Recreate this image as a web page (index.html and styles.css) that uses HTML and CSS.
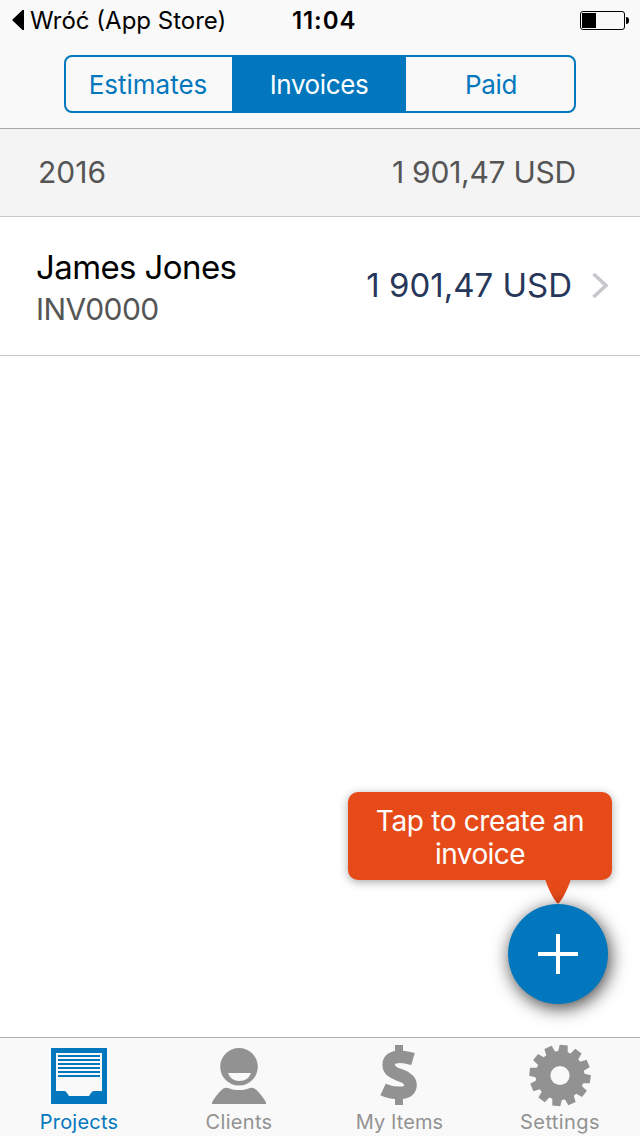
FILE: index.html
```
<!DOCTYPE html>
<html lang="en">
<head>
  <meta charset="UTF-8">
  <title>Invoices</title>
  <link rel="stylesheet" href="styles.css">
</head>
<body>
  <div class="app">

    <header class="header">
      <div class="status-bar">
        <div class="back">
          <svg class="back-arrow" width="12" height="22" viewBox="0 0 12 22"><path d="M12 1v20h-1.500L0.500 11.500v-1L10.500 1z"/></svg>
          <span class="back-label">Wróć (App Store)</span>
        </div>
        <span class="clock">11:04</span>
        <div class="battery">
          <div class="battery-body"><div class="battery-level"></div></div>
          <div class="battery-tip"></div>
        </div>
      </div>
      <nav class="segments">
        <a class="segment estimates">Estimates</a>
        <a class="segment invoices active">Invoices</a>
        <a class="segment paid">Paid</a>
      </nav>
    </header>

    <main class="content">
      <div class="section-header">
        <span class="section-year">2016</span>
        <span class="section-total">1 901,47 USD</span>
      </div>
      <div class="row">
        <div class="row-info">
          <span class="client">James Jones</span>
          <span class="number">INV0000</span>
        </div>
        <span class="amount">1 901,47 USD</span>
        <svg class="chevron" width="18" height="28" viewBox="0 0 18 28"><path d="M1.500 2L14 13.500 1.500 25" fill="none" stroke="#c7c7cc" stroke-width="3.600"/></svg>
      </div>

      <!-- Floating add button with its hint -->
      <div class="create">
        <div class="hint">
          <span class="hint-line">Tap to create an</span>
          <span class="hint-line hint-second">invoice</span>
          <svg class="hint-tail" width="26" height="26" viewBox="0 0 26 26"><path d="M0 0h26Q21 15 14.500 23.500Q13 25.500 11.500 23.500Q5 15 0 0z" fill="#e64a19"/></svg>
        </div>
        <button class="add">
          <svg width="40" height="40" viewBox="0 0 40 40"><path d="M18 0h4v18h18v4H22v18h-4V22H0v-4h18z" fill="#fff"/></svg>
        </button>
      </div>
    </main>

    <footer class="tabs">
      <a class="tab active">
        <svg class="tab-icon" width="64" height="64" viewBox="1 0 64 64">
          <path d="M4 4h56v56H4z" fill="#0277bd"/>
          <path d="M9 9h46v38h-8q-2 0-3 2l-2 3H22l-2-3q-1-2-3-2H9z" fill="#f9f9f9"/>
          <path d="M11 12h42M11 16h42M11 20h42M11 24h42M11 28h42M11 32h42" stroke="#0277bd" stroke-width="2"/>
        </svg>
        <span class="tab-label projects">Projects</span>
      </a>
      <a class="tab">
        <svg class="tab-icon" width="64" height="64" viewBox="0 0 64 64">
          <circle cx="31" cy="22.800" r="18.800"/>
          <path d="M20 29h23q-3 8-11.500 8T20 29z" fill="#f9f9f9"/>
          <path d="M4 60v-1.500C6 54 10 49.500 13.500 46q3.500-3.500 8-1.500c5.500 2 13.500 2 19 0q4.500-2 8 1.500C52 49.500 56 54 58 58.500V60z"/>
        </svg>
        <span class="tab-label clients">Clients</span>
      </a>
      <a class="tab">
        <svg class="tab-icon" width="64" height="64" viewBox="0 0 64 64">
          <path d="M27 1h8v8h-8zM27 53h8v8h-8z"/>
          <path d="M45 15Q37 12.700 32 12.700C24.500 12.700 20.700 16 20.700 20.500C20.700 26.500 25 28.500 31 30.800C38 33.300 42.500 36 42.500 41C42.500 46.300 38.500 48.800 31 48.800Q22 48.800 15 45.500" fill="none" stroke="#929292" stroke-width="12.600"/>
        </svg>
        <span class="tab-label items">My Items</span>
      </a>
      <a class="tab">
        <svg class="tab-icon" width="64" height="64" viewBox="-32 -31.500 64 64">
          <g transform="rotate(7)">
            <circle r="24.500"/>
            <g id="teeth">
              <path id="tooth" d="M-5-22l1-8.600h8l1 8.600v44l-1 8.600h-8l-1-8.600z"/>
              <use href="#tooth" transform="rotate(30)"/>
              <use href="#tooth" transform="rotate(60)"/>
            </g>
            <use href="#teeth" transform="rotate(90)"/>
          </g>
          <circle r="9.600" fill="#f9f9f9"/>
        </svg>
        <span class="tab-label settings">Settings</span>
      </a>
    </footer>

  </div>
</body>
</html>
```
FILE: styles.css
```
* {
  box-sizing: border-box;
}

body {
  margin: 0;
  background: #fff;
  font-family: Inter, "Liberation Sans", sans-serif;
}

.app {
  display: flex;
  flex-direction: column;
  width: 640px;
  height: 1136px;
  overflow: hidden;
}

/* Header */
.header {
  height: 129px;
  background: #f9f9f9;
  border-bottom: 1px solid #a9a9ac;
}

.status-bar {
  display: grid;
  grid-template-columns: 292px 1fr auto;
  align-items: center;
  height: 40px;
  padding-right: 11px;
}

.back {
  display: flex;
  align-items: center;
  gap: 6px;
  padding-left: 12px;
}

.back-label {
  font-size: 24px;
}

.clock {
  font-size: 24px;
  font-weight: 600;
  letter-spacing: 0.9px;
}

.battery {
  display: flex;
  align-items: center;
  gap: 1px;
}

.battery-body {
  width: 45px;
  height: 19px;
  padding: 1px;
  border: 1px solid #000;
  border-radius: 3px;
}

.battery-level {
  width: 14px;
  height: 15px;
  background: #000;
}

.battery-tip {
  width: 3px;
  height: 7px;
  background: #000;
  border-radius: 0 3px 3px 0;
}

.segments {
  display: grid;
  grid-template-columns: 166px 174px 1fr;
  width: 512px;
  height: 58px;
  margin: 15px 0 0 64px;
  border: 2px solid #0277bd;
  border-radius: 8px;
  overflow: hidden;
}

.segment {
  display: flex;
  align-items: center;
  justify-content: center;
  color: #0277bd;
  font-size: 26px;
}

.estimates {
  padding-right: 2px;
}

.invoices {
  letter-spacing: -0.4px;
}

.paid {
  padding-left: 2px;
  letter-spacing: -0.3px;
}

.segment.active {
  background: #0277bd;
  color: #fff;
}

/* Invoice list */
.content {
  position: relative;
  flex: 1;
}

.section-header {
  display: flex;
  align-items: center;
  justify-content: space-between;
  height: 88px;
  padding: 0 64px 2px 38px;
  background: #f4f4f4;
  border-bottom: 1px solid #c8c7cc;
  color: #555;
  font-size: 30px;
}

.section-total {
  letter-spacing: -0.25px;
}

.row {
  display: flex;
  align-items: center;
  height: 139px;
  padding: 0 30px 0 36px;
  border-bottom: 1px solid #c8c7cc;
}

.row-info {
  display: flex;
  flex: 1;
  flex-direction: column;
  padding-top: 3px;
}

.client {
  font-size: 33px;
  letter-spacing: -0.6px;
  line-height: 42px;
}

.number {
  color: #555;
  font-size: 30px;
  letter-spacing: -0.6px;
  line-height: 42px;
}

.amount {
  padding-bottom: 2px;
  color: #27375a;
  font-size: 33px;
}

.chevron {
  margin-left: 20px;
}

/* Add button and hint */
.create {
  position: absolute;
  right: 28px;
  bottom: 33px;
  width: 264px;
}

.hint {
  position: relative;
  display: flex;
  flex-direction: column;
  align-items: center;
  height: 88px;
  padding-top: 13px;
  background: #e64a19;
  border-radius: 10px;
  box-shadow: 0 2px 10px rgba(0, 0, 0, 0.35);
  color: #fff;
  font-size: 28px;
  letter-spacing: -0.35px;
  line-height: 33px;
}

.hint-second {
  letter-spacing: -0.6px;
}

.hint-tail {
  position: absolute;
  top: 87px;
  left: 197px;
}

.add {
  display: flex;
  position: relative;
  align-items: center;
  justify-content: center;
  width: 100px;
  height: 100px;
  margin: 24px 0 0 160px;
  padding: 0;
  border: 0;
  border-radius: 50%;
  background: #0277bd;
  box-shadow: 2px 4px 18px rgba(0, 0, 0, 0.75);
}

/* Tab bar */
.tabs {
  display: grid;
  grid-template-columns: repeat(4, 1fr);
  height: 99px;
  padding-top: 6px;
  background: #f9f9f9;
  border-top: 1px solid #acacac;
}

.tab {
  display: flex;
  flex-direction: column;
  align-items: center;
  color: #929292;
  fill: #929292;
  font-size: 20px;
}

.tab.active {
  color: #0277bd;
}

.tab-icon {
  width: 64px;
  height: 64px;
}

.tab-label {
  line-height: 28px;
}

.projects {
  padding-right: 2px;
  letter-spacing: 0.2px;
}

.clients {
  padding-right: 2px;
  letter-spacing: 0.3px;
}

.items {
  padding-right: 1px;
  letter-spacing: 0.1px;
}

.settings {
  letter-spacing: 0.4px;
}
```
